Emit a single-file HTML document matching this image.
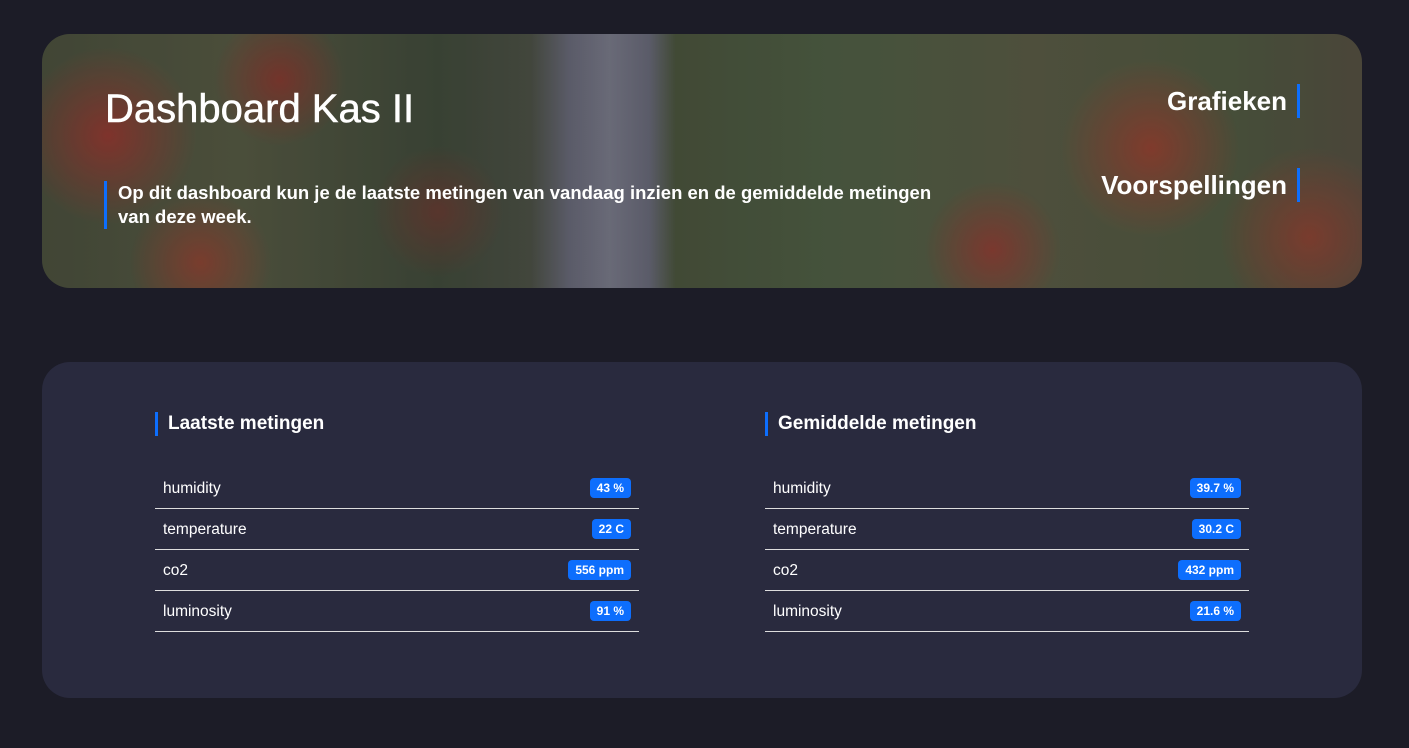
<!DOCTYPE html><html><head><style>
body{margin:0;width:1409px;height:748px;background:#1c1c27;font-family:"Liberation Sans",sans-serif;color:#fff;overflow:hidden;position:relative}
.hero{position:absolute;left:42px;top:34px;width:1320px;height:254px;border-radius:28px;overflow:hidden;
background:
radial-gradient(circle at 5% 40%,rgba(170,50,40,.8) 0,rgba(170,50,40,0) 7%),
radial-gradient(circle at 18% 18%,rgba(160,45,35,.7) 0,rgba(160,45,35,0) 6%),
radial-gradient(circle at 12% 90%,rgba(170,60,40,.7) 0,rgba(170,60,40,0) 6%),
radial-gradient(circle at 84% 45%,rgba(170,60,40,.8) 0,rgba(170,60,40,0) 8%),
radial-gradient(circle at 72% 85%,rgba(170,50,40,.7) 0,rgba(170,50,40,0) 7%),
radial-gradient(circle at 96% 80%,rgba(170,60,40,.7) 0,rgba(170,60,40,0) 7%),
radial-gradient(circle at 30% 70%,rgba(130,50,40,.6) 0,rgba(130,50,40,0) 7%),
linear-gradient(90deg,#4a5038 0%,#565a3e 15%,#3f4a35 30%,#4b5040 37%,#6a6b78 40%,#7c7d8a 43%,#6a6b78 46%,#4a5538 48%,#4f6040 60%,#5a5c40 75%,#505a3c 90%,#55503d 100%)}
.hero:after{content:"";position:absolute;inset:0;background:rgba(30,30,45,.2)}
.hero *{position:relative;z-index:1}
h1{position:absolute;left:63px;top:53px;margin:0;font-size:40px;font-weight:normal;-webkit-text-stroke:0.5px #fff}
.sub{position:absolute;left:62px;top:147px;width:845px;border-left:3px solid #0d6efd;padding-left:11px;font-size:18.5px;font-weight:bold;line-height:24px}
.nav{position:absolute;right:62px;font-size:26px;font-weight:bold;border-right:3px solid #0d6efd;padding-right:10px;line-height:34px}
.card{position:absolute;left:42px;top:362px;width:1320px;height:336px;border-radius:28px;background:#292a3e}
.col{position:absolute;top:50px;width:484px}
.col h2{margin:0;font-size:19px;font-weight:bold;border-left:3px solid #0d6efd;padding-left:10px;line-height:24px}
.rows{margin-top:32px}
.row{height:40px;border-bottom:1px solid #ddd;display:flex;align-items:center;justify-content:space-between;padding:0 8px;font-size:15.5px}
.row span:first-child{position:relative;top:1px}
.b{background:#0d6efd;border-radius:4px;font-size:12px;font-weight:bold;padding:3px 7px}
</style></head><body>
<div class="hero">
<h1>Dashboard Kas II</h1>
<div class="sub">Op dit dashboard kun je de laatste metingen van vandaag inzien en de gemiddelde metingen van deze week.</div>
<div class="nav" style="top:50px">Grafieken</div>
<div class="nav" style="top:134px">Voorspellingen</div>
</div>
<div class="card">
<div class="col" style="left:113px"><h2>Laatste metingen</h2><div class="rows">
<div class="row"><span>humidity</span><span class="b">43 %</span></div>
<div class="row"><span>temperature</span><span class="b">22 C</span></div>
<div class="row"><span>co2</span><span class="b">556 ppm</span></div>
<div class="row"><span>luminosity</span><span class="b">91 %</span></div></div></div>
<div class="col" style="left:723px"><h2>Gemiddelde metingen</h2><div class="rows">
<div class="row"><span>humidity</span><span class="b">39.7 %</span></div>
<div class="row"><span>temperature</span><span class="b">30.2 C</span></div>
<div class="row"><span>co2</span><span class="b">432 ppm</span></div>
<div class="row"><span>luminosity</span><span class="b">21.6 %</span></div></div></div>
</div>
</body></html>
